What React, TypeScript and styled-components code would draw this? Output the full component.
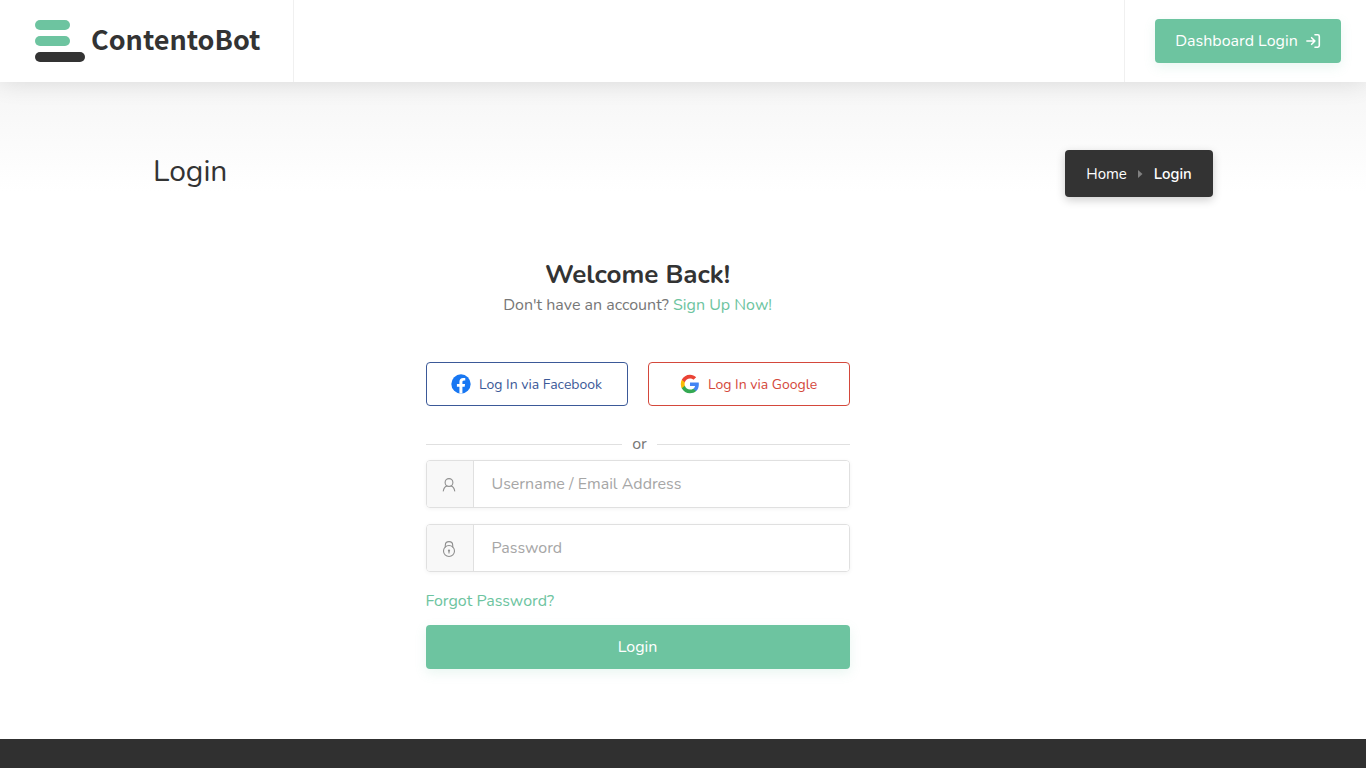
import React from "react";
import styled, { createGlobalStyle, css } from "styled-components";

const GREEN = "#6dc4a0";
const DARK = "#333333";

const GlobalStyle = createGlobalStyle`
  *, *::before, *::after { box-sizing: border-box; }
  html, body { margin: 0; padding: 0; }
  body {
    background: #fff;
    color: #777;
    font-family: Nunito, Lato, "Open Sans", sans-serif;
    font-size: 16px;
    line-height: 24px;
  }
  h1, h2, p { margin: 0; }
  a { color: inherit; text-decoration: none; }
  button, input { font: inherit; }
  svg { display: block; flex: none; }
`;

const Page = styled.div`
  min-height: 100vh;
  display: flex;
  flex-direction: column;
`;

const Header = styled.header`
  position: relative;
  height: 82px;
  flex: none;
  display: flex;
  justify-content: space-between;
  background: #fff;
  box-shadow: 0 0 24px rgba(0, 0, 0, 0.12);
`;

const LogoLink = styled.a`
  display: flex;
  align-items: center;
  gap: 6px;
  width: 294px;
  padding-left: 35px;
  border-right: 1px solid #f0f0f0;
`;

const LogoText = styled.span`
  padding-bottom: 4px;
  color: ${DARK};
  font-family: "Noto Sans CJK SC", "Noto Sans", sans-serif;
  font-size: 27px;
  line-height: 40px;
  font-weight: 700;
`;

const HeaderActions = styled.div`
  display: flex;
  align-items: center;
  padding: 0 25px 0 30px;
  border-left: 1px solid #f0f0f0;
`;

const solidButton = css`
  display: flex;
  align-items: center;
  justify-content: center;
  gap: 8px;
  height: 44px;
  border: 0;
  border-radius: 4px;
  background: ${GREEN};
  color: #fff;
  cursor: pointer;
  box-shadow: 0 4px 12px rgba(109, 196, 160, 0.15);
`;

const DashboardLink = styled.a`
  ${solidButton}
  width: 186px;
`;

const TitleBar = styled.div`
  padding: 68px 0 60px;
  background: linear-gradient(#f6f6f6, #fff 110px);
`;

const Container = styled.div`
  width: 100%;
  max-width: 1090px;
  margin: 0 auto;
  padding: 0 15px;
`;

const TitleRow = styled(Container)`
  display: flex;
  justify-content: space-between;
  align-items: flex-start;
`;

const Title = styled.h1`
  color: ${DARK};
  font-size: 30px;
  line-height: 44px;
  font-weight: 400;
`;

const Breadcrumbs = styled.nav`
  display: flex;
  align-items: center;
  justify-content: center;
  gap: 11px;
  width: 148px;
  height: 47px;
  border-radius: 4px;
  background: ${DARK};
  color: #fff;
  font-size: 15px;
  box-shadow: 0 3px 10px rgba(0, 0, 0, 0.2);
`;

const Current = styled.span`
  font-weight: 600;
`;

const LoginArea = styled(Container)`
  display: grid;
  grid-template-columns: 3fr 5fr 4fr;
  padding: 0;
  margin-bottom: 70px;

  @media (max-width: 800px) {
    grid-template-columns: 1fr;
  }
`;

const LoginForm = styled.form`
  grid-column: 2;
  padding: 0 15px;
  display: flex;
  flex-direction: column;

  @media (max-width: 800px) {
    grid-column: 1;
  }
`;

const Welcome = styled.div`
  text-align: center;
`;

const WelcomeTitle = styled.h2`
  color: ${DARK};
  font-size: 26px;
  line-height: 36px;
  font-weight: 700;
`;

const GreenLink = styled.a`
  color: ${GREEN};
`;

const SocialRow = styled.div`
  display: grid;
  grid-template-columns: 1fr 1fr;
  gap: 20px;
  margin-top: 45px;
`;

const SocialButton = styled.button<{ $color: string }>`
  display: flex;
  align-items: center;
  justify-content: center;
  gap: 8px;
  height: 44px;
  padding: 0;
  border: 1px solid ${(p) => p.$color};
  border-radius: 4px;
  background: #fff;
  color: ${(p) => p.$color};
  font-size: 14px;
  line-height: 25px;
  cursor: pointer;
`;

const Divider = styled.div`
  display: flex;
  align-items: center;
  gap: 10px;
  margin: 26px 0 4px;

  &::before,
  &::after {
    content: "";
    flex: 50;
    height: 1px;
    background: #e0e0e0;
  }

  &::before {
    flex: 51;
  }
`;

const Field = styled.label`
  display: flex;
  height: 48px;
  margin-bottom: 16px;
  overflow: hidden;
  border: 1px solid #e0e0e0;
  border-radius: 4px;
  box-shadow: 0 1px 4px rgba(0, 0, 0, 0.05);
`;

const FieldIcon = styled.span`
  display: flex;
  align-items: center;
  justify-content: center;
  width: 47px;
  padding: 2px 2px 0 0;
  border-right: 1px solid #e0e0e0;
  background: #f8f8f8;
  color: #909090;
`;

const TextInput = styled.input`
  flex: 1;
  min-width: 0;
  padding: 0 18px;
  border: 0;
  outline: 0;
  background: #fff;
  color: #666;

  &::placeholder {
    color: #a6a6a6;
    opacity: 1;
  }
`;

const ForgotLink = styled(GreenLink)`
  align-self: flex-start;
  margin: 1px 0 12px;
`;

const SubmitButton = styled.button`
  ${solidButton}
  width: 100%;
`;

const Footer = styled.footer`
  flex: 1;
  min-height: 29px;
  background: #303030;
`;

const LogoMark = () => (
  <svg width="50" height="42" viewBox="0 0 50 42" aria-hidden="true">
    <rect width="35" height="10" rx="5" fill={GREEN} />
    <rect y="16" width="35" height="10" rx="5" fill={GREEN} />
    <rect y="32" width="50" height="10" rx="5" fill={DARK} />
  </svg>
);

const LoginIcon = () => (
  <svg width="15" height="16" viewBox="0 0 15 16" fill="none" stroke="currentColor" strokeWidth="1.6" strokeLinecap="round" strokeLinejoin="round" aria-hidden="true">
    <path d="M.9 8h8M5.6 4.7 8.9 8 5.6 11.3M9 1.8h2.7c1 0 1.6.6 1.6 1.6v9.2c0 1-.6 1.6-1.6 1.6H9" />
  </svg>
);

const FacebookIcon = () => (
  <svg width="20" height="20" viewBox="0 0 24 24" aria-hidden="true">
    <circle cx="12" cy="12" r="11.6" fill="#1877f2" />
    <path fill="#fff" d="M16.4 15.3l.5-3.4h-3.2V9.6c0-.9.5-1.8 1.9-1.8h1.5V4.9s-1.3-.2-2.6-.2c-2.7 0-4.4 1.6-4.4 4.6v2.6h-3v3.4h3v8.2c1.2.2 2.4.2 3.6 0v-8.2z" />
  </svg>
);

const GoogleIcon = () => (
  <svg width="20" height="20" viewBox="-1 -1 26 26" aria-hidden="true">
    <path fill="#4285f4" d="M23.5 12.3c0-.9-.1-1.5-.2-2.2H12v4.5h6.6c-.3 1.5-1.1 2.8-2.4 3.6v3h3.9c2.2-2.1 3.4-5.2 3.4-8.9z" />
    <path fill="#34a853" d="M12 24c3.2 0 6-1.1 8-2.9l-3.9-3c-1.1.7-2.4 1.2-4.1 1.2-3.1 0-5.8-2.1-6.7-5H1.3v3.1C3.3 21.3 7.3 24 12 24z" />
    <path fill="#fbbc05" d="M5.3 14.3c-.5-1.5-.5-3.1 0-4.6V6.6h-4c-1.7 3.4-1.7 7.4 0 10.8z" />
    <path fill="#ea4335" d="M12 4.7c1.8 0 3.3.6 4.6 1.8L20 3.1C17.9 1.2 15.2 0 12 0 7.3 0 3.3 2.7 1.3 6.6l4 3.1c.9-2.9 3.6-5 6.7-5z" />
  </svg>
);

const UserIcon = () => (
  <svg width="14" height="16" viewBox="0 0 14 16" fill="none" stroke="currentColor" strokeWidth="1.1" strokeLinecap="round" aria-hidden="true">
    <circle cx="7" cy="5.5" r="3.9" />
    <path d="M1.3 14c.4-2.6 1.7-4.5 3.8-5.1M12.7 14c-.4-2.6-1.7-4.5-3.8-5.1" />
  </svg>
);

const LockIcon = () => (
  <svg width="14" height="18" viewBox="0 0 14 18" fill="none" stroke="currentColor" strokeWidth="1.1" strokeLinecap="round" aria-hidden="true">
    <circle cx="7" cy="11" r="5.5" />
    <path d="M3.3 7V5.2C3.3 3 4.9 1.6 7 1.6s3.7 1.4 3.7 3.6V7M7 11v2" />
    <circle cx="7" cy="10.6" r=".6" fill="currentColor" />
  </svg>
);

const Caret = () => (
  <svg width="5" height="8" viewBox="0 0 5 8" aria-hidden="true">
    <path d="M0 0l4.5 4L0 8z" fill="#808080" />
  </svg>
);

export default function App() {
  return (
    <Page>
      <GlobalStyle />
      <Header>
        <LogoLink href="#">
          <LogoMark />
          <LogoText>ContentoBot</LogoText>
        </LogoLink>
        <HeaderActions>
          <DashboardLink href="#">
            Dashboard Login
            <LoginIcon />
          </DashboardLink>
        </HeaderActions>
      </Header>
      <main>
        <TitleBar>
          <TitleRow>
            <Title>Login</Title>
            <Breadcrumbs aria-label="Breadcrumb">
              <a href="#">Home</a>
              <Caret />
              <Current>Login</Current>
            </Breadcrumbs>
          </TitleRow>
        </TitleBar>
        <LoginArea>
          <LoginForm onSubmit={(e) => e.preventDefault()}>
            <Welcome>
              <WelcomeTitle>Welcome Back!</WelcomeTitle>
              <p>
                Don't have an account? <GreenLink href="#">Sign Up Now!</GreenLink>
              </p>
            </Welcome>
            <SocialRow>
              <SocialButton type="button" $color="#3b5998">
                <FacebookIcon />
                Log In via Facebook
              </SocialButton>
              <SocialButton type="button" $color="#d4483b">
                <GoogleIcon />
                Log In via Google
              </SocialButton>
            </SocialRow>
            <Divider>or</Divider>
            <Field>
              <FieldIcon><UserIcon /></FieldIcon>
              <TextInput type="text" placeholder="Username / Email Address" aria-label="Username / Email Address" />
            </Field>
            <Field>
              <FieldIcon><LockIcon /></FieldIcon>
              <TextInput type="password" placeholder="Password" aria-label="Password" />
            </Field>
            <ForgotLink href="#">Forgot Password?</ForgotLink>
            <SubmitButton type="submit">Login</SubmitButton>
          </LoginForm>
        </LoginArea>
      </main>
      <Footer />
    </Page>
  );
}
